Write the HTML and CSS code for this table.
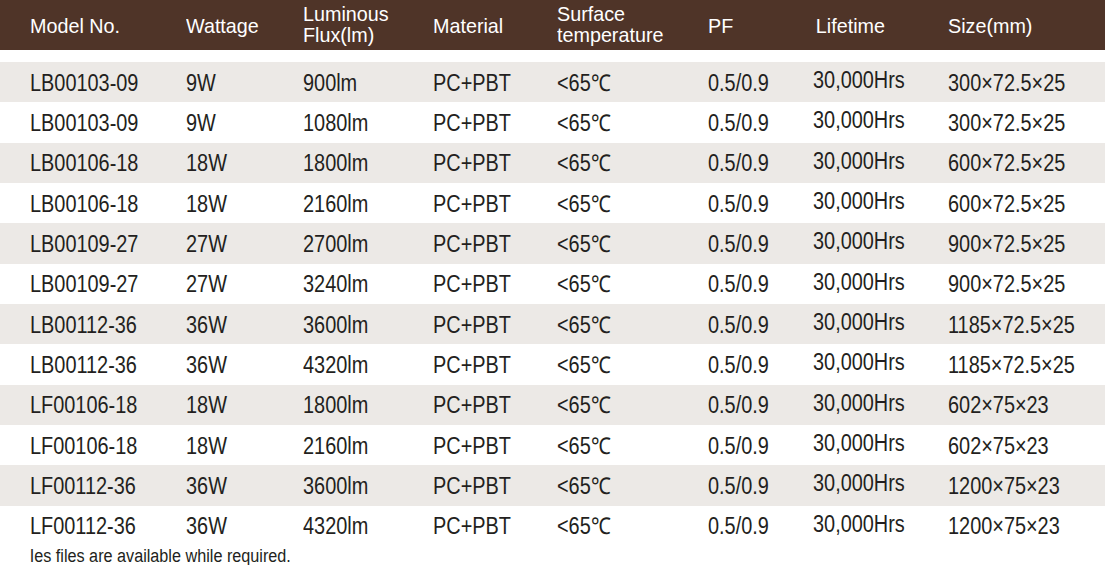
FILE: index.html
```html
<!DOCTYPE html>
<html>
<head>
<meta charset="utf-8">
<link rel="stylesheet" href="styles.css">
</head>
<body>
<div class="spec">
  <div class="row head">
    <div class="c">Model No.</div>
    <div class="c">Wattage</div>
    <div class="c two">Luminous<br>Flux(lm)</div>
    <div class="c">Material</div>
    <div class="c two">Surface<br>temperature</div>
    <div class="c">PF</div>
    <div class="c life">Lifetime</div>
    <div class="c">Size(mm)</div>
  </div>
  <div class="body">
    <div class="row"><div class="c">LB00103-09</div><div class="c">9W</div><div class="c">900lm</div><div class="c">PC+PBT</div><div class="c">&lt;65℃</div><div class="c">0.5/0.9</div><div class="c">30,000Hrs</div><div class="c">300×72.5×25</div></div>
    <div class="row"><div class="c">LB00103-09</div><div class="c">9W</div><div class="c">1080lm</div><div class="c">PC+PBT</div><div class="c">&lt;65℃</div><div class="c">0.5/0.9</div><div class="c">30,000Hrs</div><div class="c">300×72.5×25</div></div>
    <div class="row"><div class="c">LB00106-18</div><div class="c">18W</div><div class="c">1800lm</div><div class="c">PC+PBT</div><div class="c">&lt;65℃</div><div class="c">0.5/0.9</div><div class="c">30,000Hrs</div><div class="c">600×72.5×25</div></div>
    <div class="row"><div class="c">LB00106-18</div><div class="c">18W</div><div class="c">2160lm</div><div class="c">PC+PBT</div><div class="c">&lt;65℃</div><div class="c">0.5/0.9</div><div class="c">30,000Hrs</div><div class="c">600×72.5×25</div></div>
    <div class="row"><div class="c">LB00109-27</div><div class="c">27W</div><div class="c">2700lm</div><div class="c">PC+PBT</div><div class="c">&lt;65℃</div><div class="c">0.5/0.9</div><div class="c">30,000Hrs</div><div class="c">900×72.5×25</div></div>
    <div class="row"><div class="c">LB00109-27</div><div class="c">27W</div><div class="c">3240lm</div><div class="c">PC+PBT</div><div class="c">&lt;65℃</div><div class="c">0.5/0.9</div><div class="c">30,000Hrs</div><div class="c">900×72.5×25</div></div>
    <div class="row"><div class="c">LB00112-36</div><div class="c">36W</div><div class="c">3600lm</div><div class="c">PC+PBT</div><div class="c">&lt;65℃</div><div class="c">0.5/0.9</div><div class="c">30,000Hrs</div><div class="c">1185×72.5×25</div></div>
    <div class="row"><div class="c">LB00112-36</div><div class="c">36W</div><div class="c">4320lm</div><div class="c">PC+PBT</div><div class="c">&lt;65℃</div><div class="c">0.5/0.9</div><div class="c">30,000Hrs</div><div class="c">1185×72.5×25</div></div>
    <div class="row"><div class="c">LF00106-18</div><div class="c">18W</div><div class="c">1800lm</div><div class="c">PC+PBT</div><div class="c">&lt;65℃</div><div class="c">0.5/0.9</div><div class="c">30,000Hrs</div><div class="c">602×75×23</div></div>
    <div class="row"><div class="c">LF00106-18</div><div class="c">18W</div><div class="c">2160lm</div><div class="c">PC+PBT</div><div class="c">&lt;65℃</div><div class="c">0.5/0.9</div><div class="c">30,000Hrs</div><div class="c">602×75×23</div></div>
    <div class="row"><div class="c">LF00112-36</div><div class="c">36W</div><div class="c">3600lm</div><div class="c">PC+PBT</div><div class="c">&lt;65℃</div><div class="c">0.5/0.9</div><div class="c">30,000Hrs</div><div class="c">1200×75×23</div></div>
    <div class="row"><div class="c">LF00112-36</div><div class="c">36W</div><div class="c">4320lm</div><div class="c">PC+PBT</div><div class="c">&lt;65℃</div><div class="c">0.5/0.9</div><div class="c">30,000Hrs</div><div class="c">1200×75×23</div></div>
  </div>
  <p class="note">Ies files are available while required.</p>
</div>
</body>
</html>
```

FILE: styles.css
```css
html, body {
  margin: 0;
  padding: 0;
  background: #ffffff;
}
body {
  font-family: "Liberation Sans", Arial, sans-serif;
  color: #231f20;
}
.spec {
  width: 1105px;
}
.row {
  display: grid;
  grid-template-columns: 156px 117px 130px 124px 151px 105px 135px 1fr;
  padding-left: 30px;
  align-items: center;
}
.c {
  white-space: nowrap;
  transform-origin: left center;
}
.head {
  height: 50px;
  background: #4f3428;
  color: #ffffff;
  font-size: 21px;
  line-height: 21px;
  margin-bottom: 12px;
}
.head .c {
  transform: scaleX(0.94);
}
.head .two {
  padding-bottom: 2px;
}
.head .life {
  padding-left: 3px;
}
.body .row {
  height: 40.33px;
  font-size: 23px;
  line-height: 24px;
  padding-top: 1px;
  box-sizing: border-box;
}
.body .c {
  transform: scaleX(0.865);
}
.body .c:nth-child(7) {
  padding-bottom: 5px;
}
.body .row:nth-child(odd) {
  background: #ece9e6;
}
.note {
  margin: 0;
  padding-left: 33px;
  font-size: 18px;
  line-height: 18px;
  padding-top: 1px;
  transform: scaleX(0.9);
  transform-origin: left center;
}
```
